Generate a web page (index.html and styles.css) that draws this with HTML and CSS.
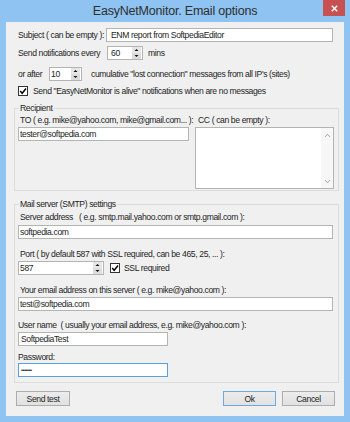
FILE: index.html
```html
<!DOCTYPE html>
<html>
<head>
<meta charset="utf-8">
<link rel="stylesheet" href="styles.css">
</head>
<body>
<div class="window">
  <div class="titlebar">
    <span></span>
    <span class="title">EasyNetMonitor. Email options</span>
    <span class="close"><svg width="7" height="7" viewBox="0 0 7 7"><path d="M0.8 0.8 L6.2 6.2 M6.2 0.8 L0.8 6.2" stroke="#fff" stroke-width="1.5"/></svg></span>
  </div>
  <div class="client">
    <div class="row">
      <span class="lbl w-subject">Subject ( can be empty ):</span>
      <div class="field grow pad4">ENM report from SoftpediaEditor</div>
    </div>
    <div class="row r-every">
      <span class="lbl w-every">Send notifications every</span>
      <div class="field spin w-60 pad3"><span class="val">60</span><span class="btns"><svg width="9" height="12" viewBox="0 0 9 12"><rect x="0" y="0" width="9" height="6" fill="#e6e6e6"/><rect x="0" y="6" width="9" height="6" fill="#dcdcdc"/><path d="M2.5 4 L4.5 2 L6.5 4 Z" fill="#111"/><path d="M2.5 8 L4.5 10 L6.5 8 Z" fill="#111"/></svg></span></div>
      <span class="after mins">mins</span>
    </div>
    <div class="row r-after">
      <span class="lbl w-after">or after</span>
      <div class="field spin w-10 pad1"><span class="val">10</span><span class="btns"><svg width="9" height="12" viewBox="0 0 9 12"><rect x="0" y="0" width="9" height="6" fill="#e6e6e6"/><rect x="0" y="6" width="9" height="6" fill="#dcdcdc"/><path d="M2.5 4 L4.5 2 L6.5 4 Z" fill="#111"/><path d="M2.5 8 L4.5 10 L6.5 8 Z" fill="#111"/></svg></span></div>
      <span class="after cumul">cumulative "lost connection" messages from all IP's (sites)</span>
    </div>
    <div class="row r-check">
      <svg class="check" width="10" height="10" viewBox="0 0 10 10"><rect x="0.5" y="0.5" width="9" height="9" fill="#fff" stroke="#333"/><path d="M2.2 5 L4.2 7.3 L8 2.5" fill="none" stroke="#000" stroke-width="1.4"/></svg>
      <span class="after">Send "EasyNetMonitor is alive" notifications when are no messages</span>
    </div>

    <fieldset class="group g-recipient">
      <legend>Recipient</legend>
      <div class="recip">
        <div class="col">
          <span class="cap pl2">TO ( e.g. mike@yahoo.com, mike@gmail.com... ):</span>
          <div class="field pad1 mt2">tester@softpedia.com</div>
        </div>
        <div class="col">
          <span class="cap pl3">CC ( can be empty ):</span>
          <div class="area mt2">
            <div class="scroll">
              <svg width="7" height="5" viewBox="0 0 7 5"><path d="M1 4 L3.5 1.2 L6 4" fill="none" stroke="#a8a8a8" stroke-width="1"/></svg>
              <svg width="7" height="5" viewBox="0 0 7 5"><path d="M1 1 L3.5 3.8 L6 1" fill="none" stroke="#a8a8a8" stroke-width="1"/></svg>
            </div>
          </div>
        </div>
      </div>
    </fieldset>

    <fieldset class="group g-mail">
      <legend>Mail server (SMTP) settings</legend>
      <span class="cap pl2 mt3">Server address &nbsp;&nbsp;( e.g. smtp.mail.yahoo.com or smtp.gmail.com ):</span>
      <div class="field pad1 mt3">softpedia.com</div>
      <span class="cap pl2 mt10">Port ( by default 587 with SSL required, can be 465, 25, ... ):</span>
      <div class="portrow mt2">
        <div class="field spin w-port pad1"><span class="val">587</span><span class="btns"><svg width="9" height="12" viewBox="0 0 9 12"><rect x="0" y="0" width="9" height="6" fill="#e6e6e6"/><rect x="0" y="6" width="9" height="6" fill="#dcdcdc"/><path d="M2.5 4 L4.5 2 L6.5 4 Z" fill="#111"/><path d="M2.5 8 L4.5 10 L6.5 8 Z" fill="#111"/></svg></span></div>
        <svg class="check ssl" width="10" height="10" viewBox="0 0 10 10"><rect x="0.5" y="0.5" width="9" height="9" fill="#fff" stroke="#333"/><path d="M2.2 5 L4.2 7.3 L8 2.5" fill="none" stroke="#000" stroke-width="1.4"/></svg>
        <span class="after">SSL required</span>
      </div>
      <span class="cap pl2 mt10">Your email address on this server ( e.g. mike@yahoo.com ):</span>
      <div class="field pad1 mt2">test@softpedia.com</div>
      <span class="cap mt9">User name &nbsp;( usually your email address, e.g. mike@yahoo.com ):</span>
      <div class="field short pad2 mt2">SoftpediaTest</div>
      <span class="cap mt6">Password:</span>
      <div class="field short focus pad2 mt1"><span class="dots">•••••••</span></div>
    </fieldset>

    <div class="buttons">
      <div class="btn send">Send test</div>
      <div class="spacer"></div>
      <div class="btn ok">Ok</div>
      <div class="btn cancel">Cancel</div>
    </div>
  </div>
</div>
</body>
</html>
```

FILE: styles.css
```css
html, body {
  margin: 0;
  padding: 0;
}
body {
  font-family: "Liberation Sans", Arial, sans-serif;
  font-size: 8.6px;
  letter-spacing: -0.38px;
  color: #1e1e1e;
}
.window {
  width: 350px;
  height: 422px;
  background: #8fc3f1;
  display: flex;
  flex-direction: column;
  overflow: hidden;
}
.titlebar {
  height: 22px;
  flex: none;
  display: grid;
  grid-template-columns: 1fr auto 1fr;
  align-items: start;
}
.title {
  font-family: "Liberation Sans", Arial, sans-serif;
  font-size: 12.5px;
  letter-spacing: -0.2px;
  color: #2e2e2e;
  line-height: 22px;
  white-space: nowrap;
}
.close {
  justify-self: end;
  margin-right: 5px;
  width: 22px;
  height: 16px;
  background: #c75050;
  display: flex;
  align-items: center;
  justify-content: center;
}
.client {
  margin: 0 6px 6px 6px;
  flex: 1;
  background: #f0f0f0;
  padding: 6px 5px 0 8px;
  display: flex;
  flex-direction: column;
}
.row {
  display: flex;
  align-items: center;
  height: 14px;
  padding-left: 4px;
  padding-right: 6px;
  white-space: nowrap;
}
.r-every { margin-top: 4px; }
.r-after { margin-top: 7px; }
.r-check { margin-top: 4px; height: 11px; }
.lbl { flex: none; }
.w-subject { width: 88px; }
.w-every { width: 89px; }
.w-after { width: 31px; }
.field {
  box-sizing: border-box;
  height: 14px;
  background: #fff;
  border: 1px solid #b4b4b4;
  display: flex;
  align-items: center;
  line-height: 12px;
  white-space: nowrap;
  overflow: hidden;
}
.grow { flex: 1; }
.pad1 { padding-left: 1px; }
.pad2 { padding-left: 2px; }
.pad3 { padding-left: 3px; }
.pad4 { padding-left: 4px; }
.spin { flex: none; padding-right: 0; }
.spin .val { flex: 1; }
.spin .btns {
  width: 9px;
  height: 12px;
  margin-right: 1px;
  display: flex;
}
.w-60 { width: 36px; }
.w-10 { width: 33px; }
.w-port { width: 86px; }
.after { margin-left: 5px; }
.mins { margin-left: 5px; }
.cumul { margin-left: 9px; }
.check { flex: none; display: block; }
.r-check .after { margin-left: 5px; }

.group {
  margin: 7px 0 0 0;
  border: 1px solid #dcdcdc;
  padding: 0 4px 1px 3px;
  min-width: 0;
  display: flex;
  flex-direction: column;
}
.group legend {
  padding: 0 1px;
  margin-left: 1px;
  line-height: 10px;
}
.g-mail {
  margin-top: 8px;
  padding: 0 5px 5px 3px;
}
.recip {
  display: grid;
  grid-template-columns: 171px 1fr;
  column-gap: 6px;
  margin-top: 2px;
}
.col {
  display: flex;
  flex-direction: column;
  min-width: 0;
}
.cap {
  line-height: 10px;
  height: 10px;
  white-space: nowrap;
  display: block;
}
.pl2 { padding-left: 2px; }
.pl3 { padding-left: 3px; }
.mt1 { margin-top: 1px; }
.mt2 { margin-top: 2px; }
.mt3 { margin-top: 3px; }
.mt6 { margin-top: 6px; }
.mt9 { margin-top: 9px; }
.mt10 { margin-top: 10px; }
.area {
  box-sizing: border-box;
  height: 62px;
  background: #fff;
  border: 1px solid #b4b4b4;
  display: flex;
  justify-content: flex-end;
}
.scroll {
  width: 12px;
  background: #f7f7f7;
  display: flex;
  flex-direction: column;
  justify-content: space-between;
  align-items: center;
  padding: 5px 0 4px;
}
.scroll svg { display: block; }
.portrow {
  display: flex;
  align-items: center;
  height: 14px;
  white-space: nowrap;
}
.ssl { margin-left: 6px; }
.portrow .after { margin-left: 4px; }
.short { width: 150px; }
.focus { border-color: #5b9ee2; }
.dots {
  font-size: 6px;
  letter-spacing: -0.6px;
  line-height: 8px;
}
.buttons {
  display: flex;
  margin-top: 8px;
  height: 15px;
}
.spacer { flex: 1; }
.btn {
  box-sizing: border-box;
  height: 15px;
  width: 53px;
  border: 1px solid #adadad;
  background: linear-gradient(#ececec, #e1e1e1);
  display: flex;
  align-items: center;
  justify-content: center;
  white-space: nowrap;
}
.send { width: 54px; margin-left: 2px; }
.ok { border-color: #6fa7df; }
.cancel { margin-left: 6px; margin-right: 4px; }
```
